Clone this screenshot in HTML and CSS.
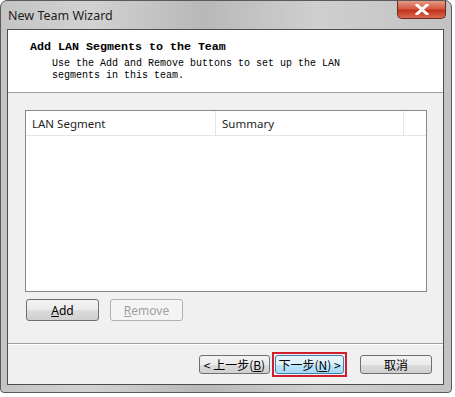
FILE: index.html
```html
<!DOCTYPE html>
<html lang="en">
<head>
  <meta charset="UTF-8" />
  <title>New Team Wizard</title>
  <link rel="stylesheet" href="styles.css">
</head>
<body>
  <div class="window">
    <div class="titlebar">
      <span class="title">New Team Wizard</span>
      <div class="close-btn">
        <svg width="14" height="11" viewBox="0 0 14 11">
          <path d="M2 1 L12 10 M12 1 L2 10" stroke="#fff" stroke-width="3" stroke-linecap="square"/>
        </svg>
      </div>
    </div>

    <div class="client">
      <!-- Wizard header -->
      <div class="wizard-header">
        <h1>Add LAN Segments to the Team</h1>
        <p>Use the Add and Remove buttons to set up the LAN<br>segments in this team.</p>
      </div>

      <div class="wizard-body">
        <div class="listview">
          <div class="list-head">
            <div class="col col-name">LAN Segment</div>
            <div class="col col-summary">Summary</div>
            <div class="col col-rest"></div>
          </div>
        </div>

        <div class="list-actions">
          <button class="btn"><u>A</u>dd</button>
          <button class="btn disabled"><u>R</u>emove</button>
        </div>
      </div>

      <!-- Navigation buttons -->
      <div class="wizard-footer">
        <button class="btn nav-btn">&lt; 上一步(<u>B</u>)</button>
        <span class="highlight">
          <button class="btn nav-btn active">下一步(<u>N</u>) &gt;</button>
        </span>
        <button class="btn nav-btn cancel">取消</button>
      </div>
    </div>
  </div>
</body>
</html>
```

FILE: styles.css
```css
body {
  margin: 0;
  background-color: #ffffff;
  font-family: "Noto Sans", "DejaVu Sans", sans-serif;
}

.window {
  width: 452px;
  height: 393px;
  border: 1px solid #5a5a5a;
  border-radius: 7px 7px 4px 4px;
  background: linear-gradient(90deg, #c4c4c4 0%, #d2d2d2 20%, #b8b8b8 45%, #cfcfcf 70%, #c2c2c2 100%);
  display: flex;
  flex-direction: column;
  box-sizing: border-box;
}

.titlebar {
  height: 28px;
  display: flex;
  align-items: flex-start;
  justify-content: space-between;
  padding-left: 7px;
}

.title {
  font-size: 12.5px;
  color: #1e1e1e;
  margin-top: 6px;
}

.close-btn {
  width: 47px;
  height: 17px;
  margin-right: 5px;
  border: 1px solid #6a2a22;
  border-top: none;
  border-radius: 0 0 5px 5px;
  background: linear-gradient(#e49a86 0%, #d45a44 45%, #c2321c 55%, #d86a50 100%);
  display: flex;
  align-items: center;
  justify-content: center;
}

.client {
  flex: 1;
  margin: 0 7px 7px 6px;
  border: 1px solid #4d4d4d;
  background-color: #f0f0f0;
  display: flex;
  flex-direction: column;
}

.wizard-header {
  height: 63px;
  background-color: #ffffff;
  border-bottom: 1px solid #a0a0a0;
  box-sizing: border-box;
  padding: 11px 0 0 22px;
  font-family: "Liberation Mono", "DejaVu Sans Mono", monospace;
}

.wizard-header h1 {
  margin: 0;
  font-size: 11.67px;
  line-height: 13px;
  font-weight: bold;
  color: #000;
}

.wizard-header p {
  margin: 4px 0 0 22px;
  font-size: 10px;
  line-height: 12px;
  color: #000;
}

.wizard-body {
  padding: 17px 16px 0 17px;
  flex: 1;
}

.listview {
  height: 182px;
  background-color: #ffffff;
  border: 1px solid #828790;
  box-sizing: border-box;
}

.list-head {
  display: flex;
  height: 24px;
  border-bottom: 1px solid #e5e5e5;
  font-size: 11.5px;
  color: #1e1e1e;
}

.col {
  display: flex;
  align-items: center;
  padding-left: 6px;
  box-sizing: border-box;
  border-right: 1px solid #e5e5e5;
}

.col-name {
  width: 190px;
}

.col-summary {
  width: 188px;
}

.col-rest {
  flex: 1;
  border-right: none;
}

.list-actions {
  display: flex;
  gap: 11px;
  margin-top: 7px;
  padding-left: 1px;
}

.btn {
  width: 73px;
  height: 22px;
  font-family: "Noto Sans", "DejaVu Sans", sans-serif;
  font-size: 12px;
  color: #000;
  border: 1px solid #707070;
  border-radius: 3px;
  background: linear-gradient(#f2f2f2 0%, #ebebeb 50%, #dddddd 51%, #cfcfcf 100%);
  padding: 0;
}

.btn.disabled {
  color: #a0a0a0;
  border-color: #adb2b5;
  background: #f4f4f4;
}

.wizard-footer {
  height: 41px;
  border-top: 1px solid #a0a0a0;
  box-shadow: inset 0 1px 0 #ffffff;
  display: flex;
  align-items: center;
  justify-content: flex-end;
  padding-right: 11px;
  box-sizing: border-box;
}

.nav-btn {
  width: 71px;
  height: 19px;
  font-family: "Noto Sans CJK SC", "Noto Sans", sans-serif;
  font-size: 12px;
  line-height: 17px;
}

.nav-btn.cancel {
  width: 72px;
}

.highlight {
  display: flex;
  border: 2px solid #d0202e;
  padding: 1px;
  margin: 0 13px 0 2px;
}

.nav-btn.active {
  border-color: #3c7fb1;
  background: linear-gradient(#eaf6fd 0%, #d9f0fc 50%, #bee6fd 51%, #a7d9f5 100%);
  width: 69px;
}
```
